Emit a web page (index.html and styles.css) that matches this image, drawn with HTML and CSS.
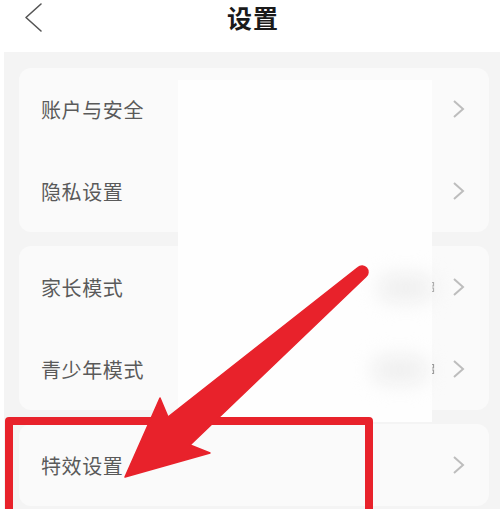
FILE: index.html
```html
<!DOCTYPE html>
<html lang="zh-CN">
<head>
<meta charset="utf-8">
<title>设置</title>
<link rel="stylesheet" href="styles.css">
</head>
<body>
<div class="page">
  <header class="topbar">
    <svg class="back" width="20" height="32" viewBox="0 0 20 32"><polyline points="17,2 2,15.5 17,29" fill="none" stroke="#555" stroke-width="1.6" stroke-linecap="round" stroke-linejoin="round"/></svg>
    <h1 class="title">设置</h1>
  </header>
  <main class="content">
    <section class="card">
      <div class="row"><span class="label">账户与安全</span><svg class="chev" width="14" height="20" viewBox="0 0 14 20"><polyline points="2,2 11,10 2,18" fill="none" stroke="#bdbdbd" stroke-width="2"/></svg></div>
      <div class="row"><span class="label">隐私设置</span><svg class="chev" width="14" height="20" viewBox="0 0 14 20"><polyline points="2,2 11,10 2,18" fill="none" stroke="#bdbdbd" stroke-width="2"/></svg></div>
    </section>
    <section class="card">
      <div class="row"><span class="label">家长模式</span><span class="right"><svg class="stub" width="5" height="12" viewBox="0 0 5 12"><path d="M0,1.5 H3.5 V5 H0 M0,7 H3.5 V10.5 H0" fill="none" stroke="#8a8a8a" stroke-width="1.2"/></svg><svg class="chev" width="14" height="20" viewBox="0 0 14 20"><polyline points="2,2 11,10 2,18" fill="none" stroke="#bdbdbd" stroke-width="2"/></svg></span></div>
      <div class="row"><span class="label">青少年模式</span><span class="right"><svg class="stub" width="5" height="12" viewBox="0 0 5 12"><path d="M0,1.5 H3.5 V5 H0 M0,7 H3.5 V10.5 H0" fill="none" stroke="#8a8a8a" stroke-width="1.2"/></svg><svg class="chev" width="14" height="20" viewBox="0 0 14 20"><polyline points="2,2 11,10 2,18" fill="none" stroke="#bdbdbd" stroke-width="2"/></svg></span></div>
    </section>
    <section class="card">
      <div class="row"><span class="label">特效设置</span><svg class="chev" width="14" height="20" viewBox="0 0 14 20"><polyline points="2,2 11,10 2,18" fill="none" stroke="#bdbdbd" stroke-width="2"/></svg></div>
    </section>
  </main>
  <div class="mask"></div>
  <div class="smudge smudge-a"></div>
  <div class="smudge smudge-b"></div>
  <div class="highlight"></div>
  <svg class="arrow" width="500" height="509" viewBox="0 0 500 509">
    <path d="M125,477 L160,398 L168,417 L358,267.5 A6,6 0 0 1 366,276.5 L190,445 L210,453 Z" fill="#e8222b" stroke="#e8222b" stroke-width="1.5" stroke-linejoin="round"/>
  </svg>
</div>
</body>
</html>
```
FILE: styles.css
```css
html, body {
  margin: 0;
  padding: 0;
  background: #ffffff;
}
body {
  width: 500px;
  height: 509px;
  overflow: hidden;
  font-family: "Noto Sans CJK SC", "Noto Sans", sans-serif;
}
.page {
  position: relative;
  width: 500px;
  height: 509px;
  overflow: hidden;
}
.topbar {
  height: 52px;
  display: flex;
  align-items: center;
  justify-content: center;
  position: relative;
  background: #ffffff;
}
.back {
  position: absolute;
  left: 24px;
  top: 2px;
}
.title {
  margin: 0;
  font-size: 25px;
  font-weight: 700;
  color: #1a1a1a;
  letter-spacing: 1px;
  line-height: 1;
  margin-top: -18px;
  padding-left: 6px;
}
.content {
  margin-left: 4px;
  background: #f4f4f4;
  padding: 16px 11px 40px 15px;
  display: flex;
  flex-direction: column;
  gap: 14px;
}
.card {
  background: #fafafa;
  border-radius: 12px;
  padding: 0 23px 0 22px;
}
.row {
  height: 82px;
  display: flex;
  align-items: center;
  justify-content: space-between;
}
.label {
  font-size: 20px;
  color: #5a5a5a;
  letter-spacing: 0.6px;
}
.right {
  display: flex;
  align-items: center;
}
.stub {
  display: block;
  margin-right: 17px;
}
.chev {
  display: block;
}
.mask {
  position: absolute;
  left: 178px;
  top: 80px;
  width: 254px;
  height: 342px;
  background: #fefefe;
}
.smudge {
  position: absolute;
  width: 56px;
  height: 28px;
  background: #efefef;
  border-radius: 20px;
  filter: blur(10px);
}
.smudge-a { left: 378px; top: 274px; }
.smudge-b { left: 372px; top: 356px; }
.highlight {
  position: absolute;
  left: 5px;
  top: 417px;
  width: 368px;
  height: 140px;
  border: 8px solid #e8222b;
  border-radius: 4px;
  box-sizing: border-box;
}
.arrow {
  position: absolute;
  left: 0;
  top: 0;
}
```
